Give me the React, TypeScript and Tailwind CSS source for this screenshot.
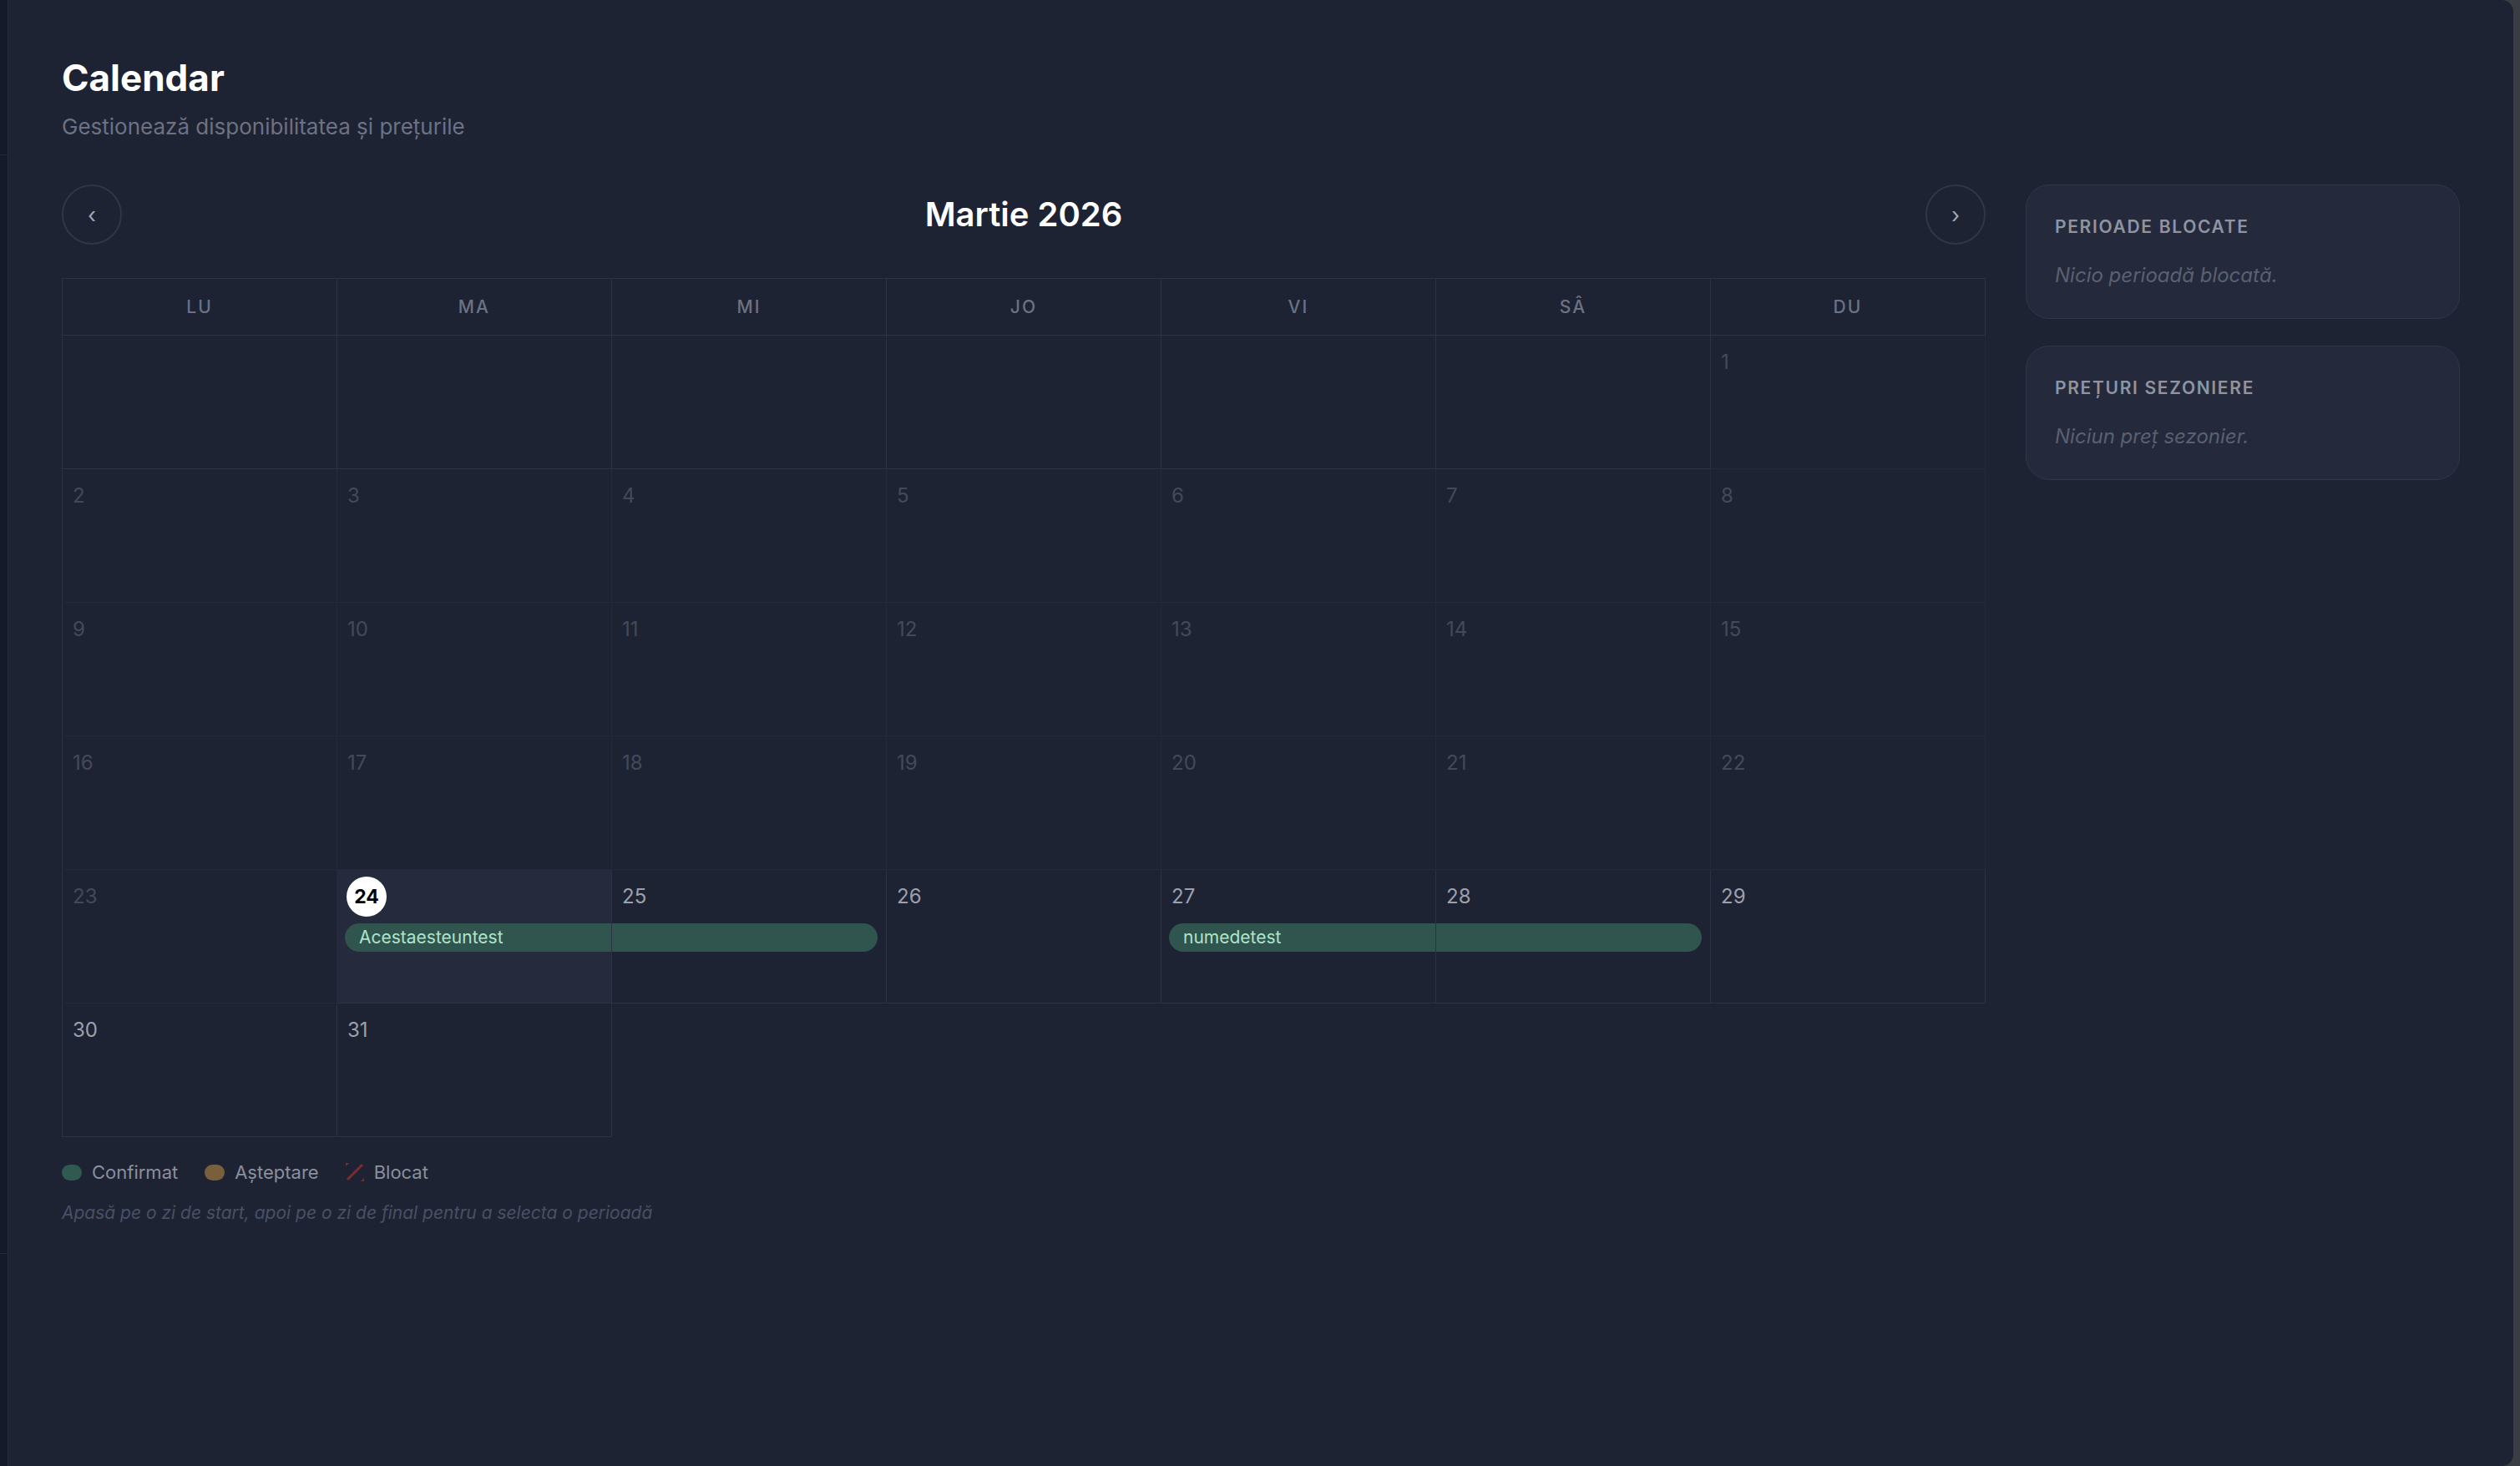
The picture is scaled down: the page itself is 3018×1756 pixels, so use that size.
import { useMemo } from "react";

type Booking = {
  id: string;
  name: string;
  start: number;
  end: number;
  status: "confirmed" | "pending";
};

const WEEKDAYS = ["LU", "MA", "MI", "JO", "VI", "SÂ", "DU"];

const bookings: Booking[] = [
  { id: "b1", name: "Acestaesteuntest", start: 24, end: 25, status: "confirmed" },
  { id: "b2", name: "numedetest", start: 27, end: 28, status: "confirmed" },
];

const TODAY = 24;

const BlockedSwatch = () => (
  <svg width="22" height="22" viewBox="0 0 22 22">
    <defs>
      <clipPath id="sw">
        <rect x="0" y="0" width="22" height="22" />
      </clipPath>
    </defs>
    <g clipPath="url(#sw)" stroke="#7d2b30" strokeWidth="3">
      <line x1="-2" y1="4" x2="4" y2="-2" />
      <line x1="2" y1="20" x2="20" y2="2" />
      <line x1="18" y1="24" x2="24" y2="18" />
    </g>
  </svg>
);

const DayCell = ({ day }: { day: number }) => {
  const isPast = day < TODAY;
  const isToday = day === TODAY;
  const booking = bookings.find((b) => day >= b.start && day <= b.end);

  return (
    <div
      className={`h-[160px] border-r border-b border-[#2c3244] pt-2 ${
        isToday ? "bg-[#252a3c]" : ""
      } ${isPast ? "opacity-40" : ""}`}
    >
      <div className="h-12 flex items-center pl-3">
        {isToday ? (
          <span className="w-12 h-12 -ml-px rounded-full bg-white text-black font-bold text-[23px] flex items-center justify-center">
            {day}
          </span>
        ) : (
          <span
            className={`text-[24px] ${
              isPast ? "text-[#7d8292]" : "text-[#9ca0ad]"
            }`}
          >
            {day}
          </span>
        )}
      </div>
      {booking && (
        <div
          className={`mt-2 h-[34px] bg-[#2f554e] flex items-center ${
            day === booking.start ? "ml-[9px] rounded-l-full pl-[17px]" : ""
          } ${day === booking.end ? "mr-[10px] rounded-r-full" : ""}`}
        >
          {day === booking.start && (
            <span className="text-[21px] text-[#b2e3ca] whitespace-nowrap">
              {booking.name}
            </span>
          )}
        </div>
      )}
    </div>
  );
};

const SideCard = ({ title, empty }: { title: string; empty: string }) => (
  <div className="rounded-[28px] border border-[#30364a] bg-[#242a3b] px-[34px] pt-[34px] pb-[35px]">
    <h3 className="text-[21px] font-semibold tracking-[0.08em] text-[#8e94a2] leading-8">
      {title}
    </h3>
    <p className="mt-[26px] text-[24px] italic text-[#5a6071] leading-8">
      {empty}
    </p>
  </div>
);

export default function App() {
  // martie 2026 incepe duminica -> 6 celule goale cu luni ca prima zi
  const cells = useMemo(() => {
    const leading = 6;
    const list: (number | null)[] = [];
    for (let i = 0; i < leading; i++) list.push(null);
    for (let d = 1; d <= 31; d++) list.push(d);
    return list;
  }, []);

  return (
    <div
      className="flex h-screen w-full bg-[#3a3d43] overflow-hidden"
      style={{ fontFamily: "Inter, 'Noto Sans', sans-serif" }}
    >
      <div className="w-[9px] shrink-0 bg-[#141a2a] flex flex-col">
        <div className="h-[186px] border-b border-[#232939]" />
        <div className="h-[1316px] border-b border-[#232939]" />
      </div>
      <div className="flex-1 bg-[#1e2334] border-l border-[#252a3a] rounded-r-[14px] px-16 pt-[65px]">
        <h1 className="text-[44px] leading-[56px] font-bold text-white">Calendar</h1>
        <p className="mt-[12px] text-[26px] leading-[38px] text-[#6c7282]">
          Gestionează disponibilitatea și prețurile
        </p>

        <div className="mt-[50px] flex gap-12 items-start">
          <div className="flex-1">
            <div className="h-[72px] flex items-center justify-between mb-10">
              <button className="w-[72px] h-[72px] rounded-full border-2 border-[#30364a] text-[#a3a8b5] text-[26px] flex items-center justify-center">
                ‹
              </button>
              <h2 className="text-[40px] font-semibold text-white">Martie 2026</h2>
              <button className="w-[72px] h-[72px] rounded-full border-2 border-[#30364a] text-[#a3a8b5] text-[26px] flex items-center justify-center">
                ›
              </button>
            </div>

            <div className="grid grid-cols-7 border-l border-t border-[#2c3244]">
              {WEEKDAYS.map((d) => (
                <div
                  key={d}
                  className="h-[68px] border-r border-b border-[#2c3244] flex items-center justify-center text-[21px] font-medium tracking-[0.1em] text-[#6b7283]"
                >
                  {d}
                </div>
              ))}
              {cells.map((day, i) =>
                day === null ? (
                  <div
                    key={`e${i}`}
                    className="h-[160px] border-r border-b border-[#2c3244]"
                  />
                ) : (
                  <DayCell key={day} day={day} />
                )
              )}
            </div>

            <div className="mt-[26px] flex items-center gap-8 text-[22px] text-[#8a8f9c] leading-8">
              <div className="flex items-center gap-3">
                <span className="w-6 h-[19px] rounded-full bg-[#2e5a50]" />
                Confirmat
              </div>
              <div className="flex items-center gap-3">
                <span className="w-6 h-[19px] rounded-full bg-[#7a5f3d]" />
                Așteptare
              </div>
              <div className="flex items-center gap-3">
                <BlockedSwatch />
                Blocat
              </div>
            </div>
            <p className="mt-[18px] text-[21px] leading-[30px] italic text-[#495064]">
              Apasă pe o zi de start, apoi pe o zi de final pentru a selecta o perioadă
            </p>
          </div>

          <div className="w-[520px] shrink-0 flex flex-col gap-8">
            <SideCard title="PERIOADE BLOCATE" empty="Nicio perioadă blocată." />
            <SideCard title="PREȚURI SEZONIERE" empty="Niciun preț sezonier." />
          </div>
        </div>
      </div>
      <div className="w-[8px] shrink-0" />
    </div>
  );
}
